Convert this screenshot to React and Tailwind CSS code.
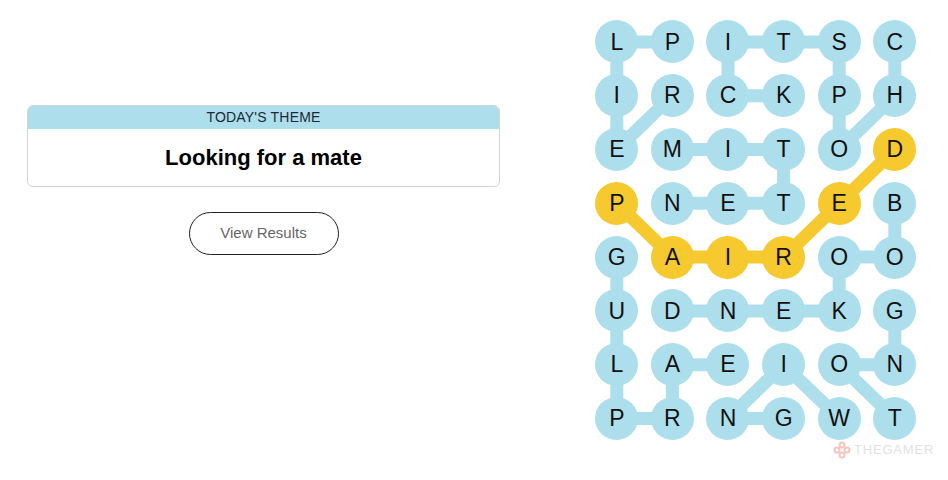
import React from "react";

const LETTERS = [
  "LPITSC",
  "IRCKPH",
  "EMITOD",
  "PNETEB",
  "GAIROO",
  "UDNEKG",
  "LAEION",
  "PRNGWT",
];

const YELLOW = ["3-0", "4-1", "4-2", "4-3", "3-4", "2-5"];

const BLUE_EDGES = [
  [0, 0, 0, 1], [0, 2, 0, 3], [0, 3, 0, 4], [0, 0, 1, 0], [0, 2, 1, 2], [0, 4, 1, 4], [0, 5, 1, 5],
  [1, 0, 2, 0], [1, 1, 2, 0], [1, 2, 1, 3], [1, 4, 2, 4], [1, 5, 2, 4],
  [2, 1, 2, 2], [2, 2, 2, 3], [2, 3, 3, 3],
  [3, 1, 3, 2], [3, 2, 3, 3], [3, 5, 4, 5],
  [4, 4, 4, 5], [4, 0, 5, 0], [4, 4, 5, 4],
  [5, 1, 5, 2], [5, 2, 5, 3], [5, 3, 5, 4], [5, 0, 6, 0], [5, 5, 6, 5],
  [6, 1, 6, 2], [6, 0, 7, 0], [6, 1, 7, 1], [6, 4, 6, 5], [6, 3, 7, 2], [6, 3, 7, 4], [6, 4, 7, 5],
  [7, 0, 7, 1], [7, 2, 7, 3],
];

const YELLOW_EDGES = [
  [3, 0, 4, 1], [4, 1, 4, 2], [4, 2, 4, 3], [4, 3, 3, 4], [3, 4, 2, 5],
];

const cx = (c) => 27.8 + c * 55.6;
const cy = (r) => 26.9 + r * 53.8;

function Board() {
  return (
    <div className="relative mt-[15px] w-[334px] h-[431px]">
      <svg className="absolute inset-0" width="334" height="431" viewBox="0 0 334 431">
        {BLUE_EDGES.map(([r1, c1, r2, c2], i) => (
          <line key={"b" + i} x1={cx(c1)} y1={cy(r1)} x2={cx(c2)} y2={cy(r2)} stroke="#addeec" strokeWidth="13" />
        ))}
        {YELLOW_EDGES.map(([r1, c1, r2, c2], i) => (
          <line key={"y" + i} x1={cx(c1)} y1={cy(r1)} x2={cx(c2)} y2={cy(r2)} stroke="#f6c92e" strokeWidth="13" />
        ))}
      </svg>
      <div className="relative grid grid-cols-[repeat(6,55.6px)] grid-rows-[repeat(8,53.8px)]">
        {LETTERS.map((row, r) =>
          row.split("").map((ch, c) => {
            const hit = YELLOW.includes(`${r}-${c}`);
            return (
              <div key={`${r}-${c}`} className="flex items-center justify-center">
                <div
                  className={
                    "w-[43px] h-[43px] rounded-full flex items-center justify-center text-[23px] text-[#111] " +
                    (hit ? "bg-[#f6c92e]" : "bg-[#addeec]")
                  }
                >
                  {ch}
                </div>
              </div>
            );
          })
        )}
      </div>
    </div>
  );
}

export default function App() {
  return (
    <div
      className="relative w-[948px] h-[480px] bg-white flex overflow-hidden"
      style={{ fontFamily: '"Liberation Sans", Arial, sans-serif' }}
    >
      <div className="w-[589px] pl-[27px] pr-[89px] pt-[105px] flex flex-col items-center">
        <div className="w-full rounded-md border border-[#d4d4d4] overflow-hidden">
          <div className="h-[23px] bg-[#addeec] flex items-center justify-center text-[14px] tracking-[0.2px] text-[#1a2a33]">
            TODAY'S THEME
          </div>
          <div className="h-[57px] flex items-center justify-center text-[22px] font-bold text-black">
            Looking for a mate
          </div>
        </div>
        <button className="mt-[25px] w-[150px] h-[43px] rounded-full border border-[#222] text-[15px] text-[#666] bg-white">
          View Results
        </button>
      </div>
      <Board />
      <div className="absolute left-[833px] top-[440px] flex items-center gap-[3px]">
        <svg width="18" height="18" viewBox="0 0 18 18">
          <g fill="none" stroke="#f4c6bd" strokeWidth="2">
            <circle cx="9" cy="4" r="2.5" />
            <circle cx="9" cy="14" r="2.5" />
            <circle cx="4" cy="9" r="2.5" />
            <circle cx="14" cy="9" r="2.5" />
          </g>
        </svg>
        <span className="text-[13px] tracking-[0.8px] text-[#e2e2e2]">THEGAMER</span>
      </div>
    </div>
  );
}
